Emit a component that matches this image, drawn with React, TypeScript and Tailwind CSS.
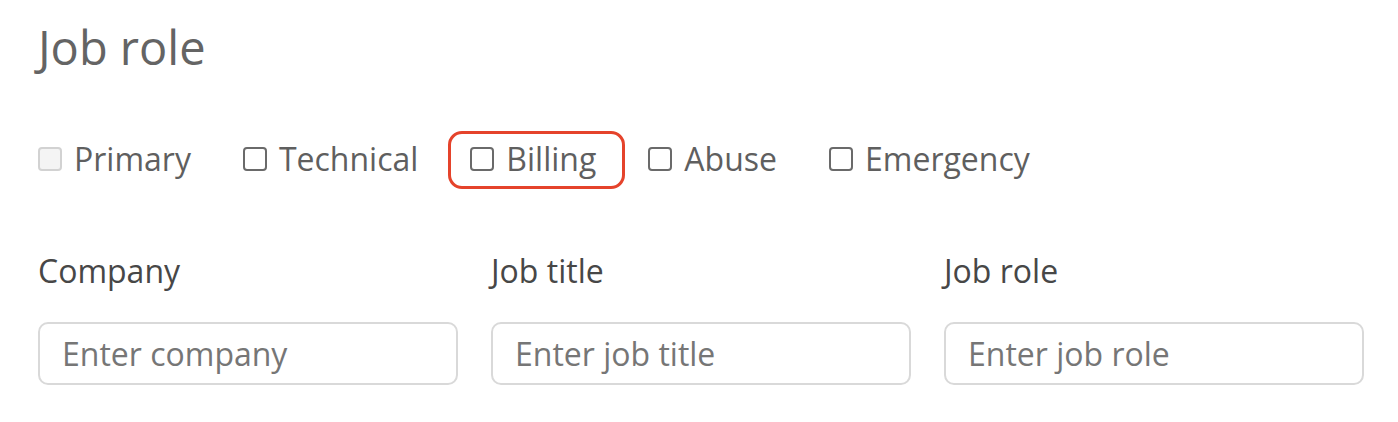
import type { ReactNode } from 'react'

const roles = [
  { label: 'Primary', disabled: true },
  { label: 'Technical' },
  { label: 'Billing', focused: true },
  { label: 'Abuse' },
  { label: 'Emergency' },
]

const fields = [
  { label: 'Company', placeholder: 'Enter company' },
  { label: 'Job title', placeholder: 'Enter job title' },
  { label: 'Job role', placeholder: 'Enter job role' },
]

function Box({ disabled }: { disabled?: boolean }) {
  return disabled ? (
    <span className="h-[24px] w-[24px] shrink-0 rounded-[4px] border-2 border-[#d2d2d2] bg-[#f4f4f4]" />
  ) : (
    <span className="h-[24px] w-[24px] shrink-0 rounded-[4px] border-2 border-[#6a6a6a] bg-white" />
  )
}

function RoleOption({ label, disabled, focused }: { label: string; disabled?: boolean; focused?: boolean }) {
  return (
    <label className="relative flex h-[24px] items-center gap-[12px]">
      {focused ? (
        <span className="pointer-events-none absolute -top-[16px] -bottom-[18px] -left-[22px] -right-[29px] rounded-[14px] border-[3px] border-[#e5432b]" />
      ) : null}
      <Box disabled={disabled} />
      <span className="text-[32px] leading-none text-[#5f5f5f]">{label}</span>
    </label>
  )
}

function Field({ label, children }: { label: string; children: ReactNode }) {
  return (
    <div className="flex flex-col">
      <span className="text-[32px] leading-none text-[#474747]">{label}</span>
      <div className="mt-[35px]">{children}</div>
    </div>
  )
}

export default function App() {
  return (
    <div className="min-h-screen bg-white px-[38px] pt-[24px] font-['Open_Sans',sans-serif]">
      <h2 className="text-[47px] leading-none text-[#646464]">Job role</h2>

      <div className="mt-[76px] flex items-center gap-[52px]">
        {roles.map((role) => (
          <RoleOption key={role.label} {...role} />
        ))}
      </div>

      <div className="mt-[84px] grid w-[1326px] grid-cols-3 gap-x-[33px]">
        {fields.map((field) => (
          <Field key={field.label} label={field.label}>
            <input
              type="text"
              placeholder={field.placeholder}
              className="h-[63px] w-full rounded-[10px] border-2 border-[#d9d9d9] bg-white px-[22px] text-[32px] text-[#333] outline-none placeholder:text-[#767676]"
            />
          </Field>
        ))}
      </div>
    </div>
  )
}
